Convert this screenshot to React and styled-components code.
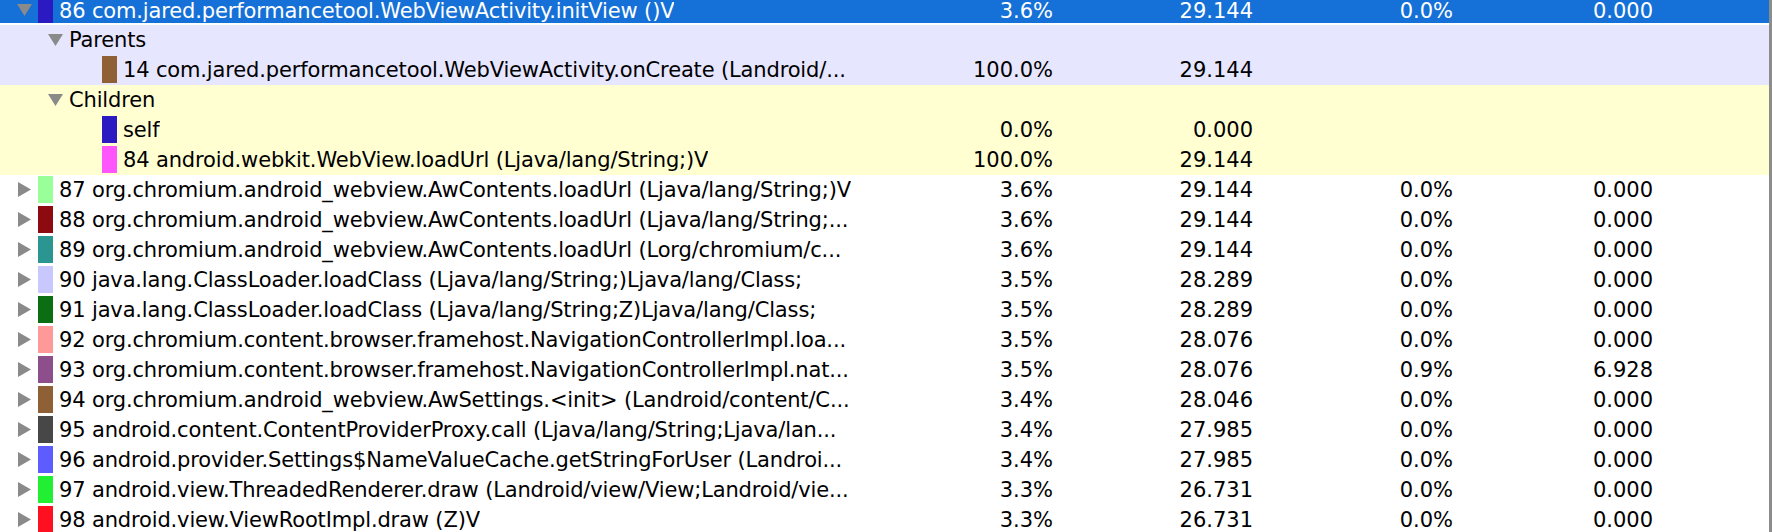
import React from "react";
import styled, { createGlobalStyle } from "styled-components";

const GlobalStyle = createGlobalStyle`
  html, body {
    margin: 0;
    padding: 0;
    background: #ffffff;
    overflow: hidden;
  }
`;

const Frame = styled.div`
  width: 1772px;
  height: 532px;
  overflow: hidden;
  box-sizing: border-box;
  border-right: 3px solid #8c8c8c;
  background: #ffffff;
  font-family: "DejaVu Sans", "Liberation Sans", sans-serif;
  font-size: 21px;
`;

const Table = styled.div`
  display: flex;
  flex-direction: column;
`;

const bgFor = (kind) => {
  if (kind === "selected") return "#1570d7";
  if (kind === "parents") return "#e6e6ff";
  if (kind === "children") return "#ffffd2";
  return "transparent";
};

// the selected row is partly scrolled out of view at the top
const Row = styled.div`
  display: grid;
  grid-template-columns: 858px 195px 200px 200px 200px;
  height: ${(p) => (p.$kind === "selected" ? 25 : 30)}px;
  line-height: ${(p) => (p.$kind === "selected" ? 23 : 30)}px;
  box-sizing: border-box;
  background: ${(p) => bgFor(p.$kind)};
  color: ${(p) => (p.$kind === "selected" ? "#ffffff" : "#000000")};
  border-bottom: ${(p) => (p.$kind === "selected" ? "2px solid #ffffff" : "none")};
`;

const NameCell = styled.div`
  display: flex;
  align-items: flex-start;
  padding-left: ${(p) => 17 + p.$indent}px;
  overflow: hidden;
  white-space: nowrap;
`;

const Toggle = styled.svg`
  flex: none;
  width: 15px;
  height: 15px;
  margin-right: 6px;
  margin-top: ${(p) => p.$top}px;
`;

const Swatch = styled.span`
  flex: none;
  width: 15px;
  height: ${(p) => (p.$short ? 23 : 27)}px;
  margin-top: ${(p) => (p.$short ? 0 : 1)}px;
  margin-right: 6px;
  background: ${(p) => p.$color};
`;

const Label = styled.span`
  overflow: hidden;
  letter-spacing: -0.15px;
`;

const Num = styled.div`
  text-align: right;
  white-space: nowrap;
`;

const Arrow = ({ open, top }) => (
  <Toggle $top={top} viewBox="0 0 15 15">
    {open ? (
      <polygon points="0,0 15,0 7.5,12" fill="#8a8a8a" />
    ) : (
      <polygon points="1,0 14,7.5 1,15" fill="#8a8a8a" />
    )}
  </Toggle>
);

const rows = [
  { kind: "selected", open: true, color: "#2b1ac2", name: "86 com.jared.performancetool.WebViewActivity.initView ()V", v: ["3.6%", "29.144", "0.0%", "0.000"] },
  { kind: "parents", head: true, name: "Parents", v: [] },
  { kind: "parents", child: true, color: "#8f5f35", name: "14 com.jared.performancetool.WebViewActivity.onCreate (Landroid/...", v: ["100.0%", "29.144"] },
  { kind: "children", head: true, name: "Children", v: [] },
  { kind: "children", child: true, color: "#2b1ac2", name: "self", v: ["0.0%", "0.000"] },
  { kind: "children", child: true, color: "#ff55ff", name: "84 android.webkit.WebView.loadUrl (Ljava/lang/String;)V", v: ["100.0%", "29.144"] },
  { color: "#99ff99", name: "87 org.chromium.android_webview.AwContents.loadUrl (Ljava/lang/String;)V", v: ["3.6%", "29.144", "0.0%", "0.000"] },
  { color: "#8c0a10", name: "88 org.chromium.android_webview.AwContents.loadUrl (Ljava/lang/String;...", v: ["3.6%", "29.144", "0.0%", "0.000"] },
  { color: "#2a9591", name: "89 org.chromium.android_webview.AwContents.loadUrl (Lorg/chromium/c...", v: ["3.6%", "29.144", "0.0%", "0.000"] },
  { color: "#c8c8ff", name: "90 java.lang.ClassLoader.loadClass (Ljava/lang/String;)Ljava/lang/Class;", v: ["3.5%", "28.289", "0.0%", "0.000"] },
  { color: "#0b6e12", name: "91 java.lang.ClassLoader.loadClass (Ljava/lang/String;Z)Ljava/lang/Class;", v: ["3.5%", "28.289", "0.0%", "0.000"] },
  { color: "#ff9999", name: "92 org.chromium.content.browser.framehost.NavigationControllerImpl.loa...", v: ["3.5%", "28.076", "0.0%", "0.000"] },
  { color: "#8c4f8c", name: "93 org.chromium.content.browser.framehost.NavigationControllerImpl.nat...", v: ["3.5%", "28.076", "0.9%", "6.928"] },
  { color: "#8f5f35", name: "94 org.chromium.android_webview.AwSettings.<init> (Landroid/content/C...", v: ["3.4%", "28.046", "0.0%", "0.000"] },
  { color: "#474747", name: "95 android.content.ContentProviderProxy.call (Ljava/lang/String;Ljava/lan...", v: ["3.4%", "27.985", "0.0%", "0.000"] },
  { color: "#5c5cff", name: "96 android.provider.Settings$NameValueCache.getStringForUser (Landroi...", v: ["3.4%", "27.985", "0.0%", "0.000"] },
  { color: "#22ee33", name: "97 android.view.ThreadedRenderer.draw (Landroid/view/View;Landroid/vie...", v: ["3.3%", "26.731", "0.0%", "0.000"] },
  { color: "#ff1020", name: "98 android.view.ViewRootImpl.draw (Z)V", v: ["3.3%", "26.731", "0.0%", "0.000"] },
];

const indentFor = (r) => {
  if (r.head) return 31;
  if (r.child) return 85;
  return 0;
};

const arrowTop = (r) => {
  if (r.kind === "selected") return 4;
  if (r.head) return 9;
  return 7;
};

export default function App() {
  return (
    <>
      <GlobalStyle />
      <Frame>
        <Table>
          {rows.map((r, i) => (
            <Row key={i} $kind={r.kind}>
              <NameCell $indent={indentFor(r)}>
                {!r.child && <Arrow open={r.open || r.head} top={arrowTop(r)} />}
                {r.color && <Swatch $color={r.color} $short={r.kind === "selected"} />}
                <Label>{r.name}</Label>
              </NameCell>
              {[0, 1, 2, 3].map((c) => (
                <Num key={c}>{r.v[c] || ""}</Num>
              ))}
            </Row>
          ))}
        </Table>
      </Frame>
    </>
  );
}
